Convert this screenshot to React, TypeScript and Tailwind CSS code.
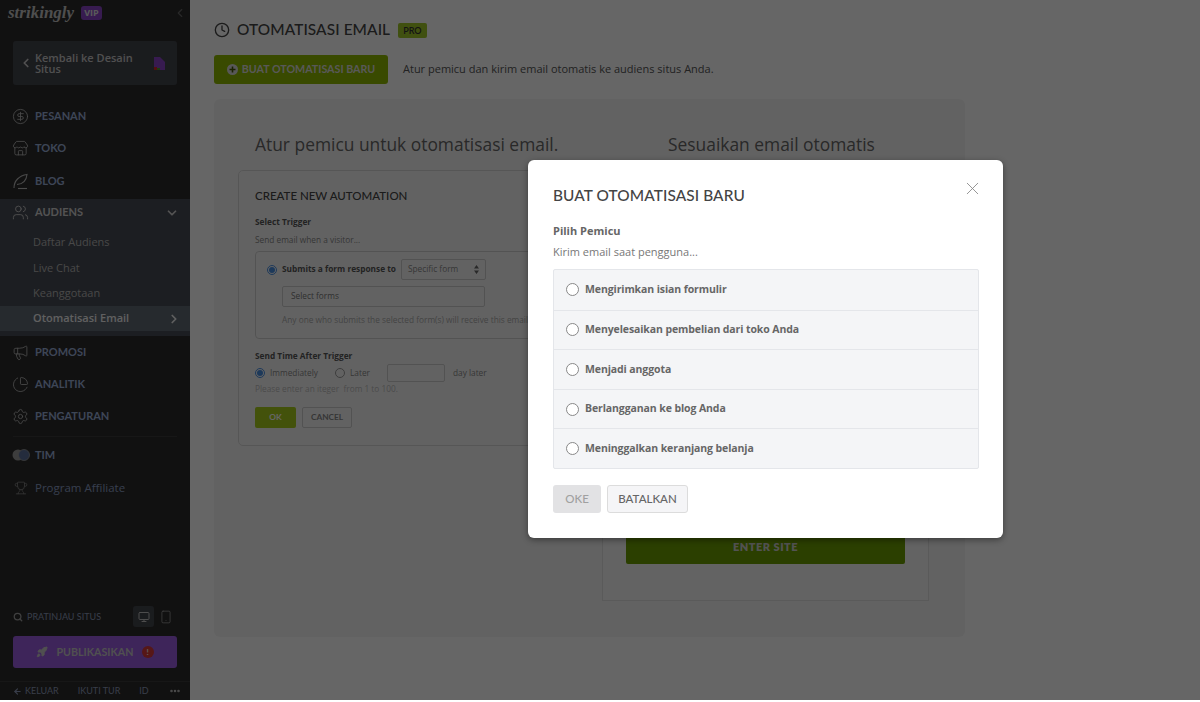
import {
  ArrowLeft,
  ChartPie,
  ChevronDown,
  ChevronLeft,
  ChevronRight,
  CircleDollarSign,
  Clock,
  Ellipsis,
  Megaphone,
  Monitor,
  Rocket,
  Search,
  Settings,
  Smartphone,
  Store,
  Trophy,
  Users,
  X,
} from 'lucide-react'
import type { ReactNode } from 'react'

const BODY = "font-['Open_Sans',sans-serif]"
const HEAD = "font-['Lato',sans-serif]"

const TRIGGERS = [
  'Mengirimkan isian formulir',
  'Menyelesaikan pembelian dari toko Anda',
  'Menjadi anggota',
  'Berlangganan ke blog Anda',
  'Meninggalkan keranjang belanja',
]

function NavItem({ icon, label, tall }: { icon: ReactNode; label: string; tall?: boolean }) {
  return (
    <div className={`flex items-center gap-[6px] pl-[12px] text-[11px] font-bold text-[#9aaed8] ${tall ? 'h-[33px]' : 'h-[32px]'} ${HEAD}`}>
      <span className="flex w-[17px] justify-center text-[#b8b8b8]">{icon}</span>
      {label}
    </div>
  )
}

function SubItem({ label, active, first }: { label: string; active?: boolean; first?: boolean }) {
  return (
    <div
      className={`flex items-center justify-between pl-[33px] pr-[9px] text-[11px] ${first ? 'h-[27px]' : 'h-[25px]'} ${BODY} ${
        active ? 'bg-[#5f6973] font-semibold text-[#f0f0f0]' : 'text-[#b4b4b4]'
      }`}
    >
      {label}
      {active && <ChevronRight size={14} strokeWidth={3} className="text-[#eee]" />}
    </div>
  )
}

function Sidebar() {
  return (
    <aside className="flex h-full w-[190px] shrink-0 flex-col bg-[#2c2c2c]">
      <div className="flex h-[25px] items-center pl-[8px] pr-[3px]">
        <span className="font-['Liberation_Serif',serif] text-[17px] font-bold italic leading-none text-[#c4c4c4]">strikingly</span>
        <span className={`ml-[7px] rounded-[3px] bg-[#8a45c8] px-[3px] text-[9px] font-bold leading-[14px] text-[#e0e0e0] ${BODY}`}>VIP</span>
        <ChevronLeft size={14} className="ml-auto text-[#666]" />
      </div>

      <div className="mx-[13px] mt-[16px] flex h-[44px] items-center rounded-[3px] bg-[#43464d] pl-[6px] pr-[12px]">
        <ChevronLeft size={14} strokeWidth={3} className="shrink-0 text-[#c8c8c8]" />
        <span className={`ml-[2px] w-[108px] text-[11px] font-semibold leading-[11px] text-[#c8c8c8] ${BODY}`}>Kembali ke Desain Situs</span>
        <svg width="11" height="13" viewBox="0 0 11 13" className="ml-auto">
          <path d="M0 0h6l5 5v8H0z" fill="#8a45c8" />
          <path d="M0 10h3v3H0z" fill="#cc2a2a" />
          <path d="M3 11h3v2H3z" fill="#4a9a2a" />
        </svg>
      </div>

      <div className="mt-[15px]">
        <NavItem icon={<CircleDollarSign size={17} strokeWidth={1.2} />} label="PESANAN" />
        <NavItem icon={<Store size={17} strokeWidth={1.2} />} label="TOKO" tall />
        <NavItem
          icon={
            <svg width="17" height="17" viewBox="0 0 17 17" fill="none" stroke="currentColor" strokeWidth="1.1">
              <path d="M2 15C2 8 7 2.5 15 1.5 14.5 7 11 11 5 11.5" />
              <path d="M6 15.5h9" />
            </svg>
          }
          label="BLOG"
        />
      </div>

      <div className="mt-[2px] h-[137px] bg-[#484c55]">
        <div className={`flex h-[27px] items-center gap-[6px] pl-[12px] pr-[11px] text-[11px] font-bold text-[#d0d0d0] ${HEAD}`}>
          <span className="flex w-[17px] justify-center">
            <Users size={17} strokeWidth={1.2} />
          </span>
          AUDIENS
          <ChevronDown size={14} strokeWidth={3} className="ml-auto" />
        </div>
        <div className="pt-[3px]">
          <SubItem label="Daftar Audiens" first />
          <SubItem label="Live Chat" />
          <SubItem label="Keanggotaan" />
          <SubItem label="Otomatisasi Email" active />
        </div>
      </div>

      <div>
        <NavItem icon={<Megaphone size={17} strokeWidth={1.2} />} label="PROMOSI" />
        <NavItem icon={<ChartPie size={17} strokeWidth={1.2} />} label="ANALITIK" />
        <NavItem icon={<Settings size={17} strokeWidth={1.2} />} label="PENGATURAN" />
      </div>

      <div className="mx-[13px] mt-[4px] border-t border-[#3a3a3a]" />

      <div className="mt-[2px]">
        <div className={`flex h-[32px] items-center gap-[5px] pl-[12px] text-[11px] font-bold text-[#9aaed8] ${HEAD}`}>
          <svg width="18" height="12" viewBox="0 0 18 12">
            <circle cx="6" cy="6" r="5.5" fill="#999" />
            <circle cx="12" cy="6" r="5.5" fill="#5a6f9a" stroke="#999" strokeWidth="0.8" />
          </svg>
          TIM
        </div>
        <div className={`flex h-[33px] items-center gap-[7px] pl-[13px] text-[11.5px] text-[#8a9cc2] ${BODY}`}>
          <span className="flex w-[15px] justify-center text-[#888]">
            <Trophy size={14} strokeWidth={1.3} />
          </span>
          Program Affiliate
        </div>
      </div>

      <div className="mt-auto">
        <div className={`flex items-center pl-[13px] pr-[17px] text-[9px] ${HEAD}`}>
          <Search size={10} strokeWidth={3} className="text-[#a0a0a0]" />
          <span className="ml-[4px] text-[#8d9ab8]">PRATINJAU SITUS</span>
          <span className="ml-auto flex h-[21px] w-[21px] items-center justify-center rounded-[3px] bg-[#43464d] text-[#c0c0c0]">
            <Monitor size={12} />
          </span>
          <Smartphone size={14} strokeWidth={1.3} className="ml-[5px] text-[#a0a0a0]" />
        </div>
        <div className={`mx-[13px] mt-[9px] flex h-[32px] items-center justify-center gap-[8px] rounded-[3px] bg-[#9b5ce0] text-[10.7px] font-bold text-[#c8c8c8] ${HEAD}`}>
          <Rocket size={12} fill="#c8c8c8" />
          PUBLIKASIKAN
          <span className="flex h-[12px] w-[12px] items-center justify-center rounded-full bg-[#d63a3a] text-[8px] leading-none text-[#eee]">!</span>
        </div>
        <div className={`mt-[13px] flex h-[19px] items-center border-t border-[#3a3a3a] pl-[13px] pr-[9px] text-[9px] text-[#8d9ab8] ${HEAD}`}>
          <ArrowLeft size={9} strokeWidth={3} />
          <span className="ml-[3px]">KELUAR</span>
          <span className="ml-[19px]">IKUTI TUR</span>
          <span className="ml-[19px]">ID</span>
          <Ellipsis size={12} strokeWidth={3} className="ml-auto text-[#c0c0c0]" />
        </div>
      </div>
    </aside>
  )
}

function Radio({ checked }: { checked?: boolean }) {
  return (
    <span className={`flex h-[10px] w-[10px] shrink-0 items-center justify-center rounded-full border ${checked ? 'border-[#4a90e2]' : 'border-[#999]'}`}>
      {checked && <span className="h-[6px] w-[6px] rounded-full bg-[#4a90e2]" />}
    </span>
  )
}

function AutomationCard() {
  return (
    <div className={`h-[276px] w-[320px] rounded-[5px] border border-[#d8d8d8] pl-[16px] pt-[16px] text-[8.3px] ${BODY}`}>
      <div className={`text-[11.5px] font-medium leading-[17px] text-[#444] ${HEAD}`}>CREATE NEW AUTOMATION</div>
      <div className="mt-[12px] font-bold leading-[12px] text-[#555]">Select Trigger</div>
      <div className="mt-[6px] leading-[12px] text-[#888]">Send email when a visitor...</div>
      <div className="mt-[5px] h-[88px] w-[330px] rounded-[4px] border border-[#d0d0d0] pl-[11px] pt-[7px]">
        <div className="flex items-center gap-[5px]">
          <Radio checked />
          <span className="font-bold text-[#555]">Submits a form response to</span>
          <span className="flex h-[21px] w-[85px] items-center justify-between rounded-[2px] border border-[#ccc] px-[6px] text-[#888]">
            Specific form
            <svg width="5" height="9" viewBox="0 0 5 9" fill="#666">
              <path d="M2.5 0 5 3.5H0zM2.5 9 0 5.5h5z" />
            </svg>
          </span>
        </div>
        <div className="ml-[15px] mt-[6px] flex h-[21px] w-[203px] items-center rounded-[2px] border border-[#ccc] px-[8px] text-[#777]">Select forms</div>
        <div className="ml-[15px] mt-[7px] whitespace-nowrap text-[#aaa]">Any one who submits the selected form(s) will receive this email.</div>
      </div>
      <div className="mt-[11px] font-bold leading-[12px] text-[#555]">Send Time After Trigger</div>
      <div className="mt-[2px] flex h-[18px] items-center text-[#888]">
        <Radio checked />
        <span className="ml-[5px]">Immediately</span>
        <span className="ml-[17px]"><Radio /></span>
        <span className="ml-[5px]">Later</span>
        <span className="ml-[17px] h-[18px] w-[58px] rounded-[2px] border border-[#ccc]" />
        <span className="ml-[8px]">day later</span>
      </div>
      <div className="mt-[1px] leading-[12px] text-[#bbb]">Please enter an iteger&nbsp; from 1 to 100.</div>
      <div className="mt-[12px] flex gap-[6px]">
        <span className={`flex h-[21px] w-[41px] items-center justify-center rounded-[2px] bg-[#a8cc1c] font-bold text-white ${HEAD}`}>OK</span>
        <span className={`flex h-[21px] w-[50px] items-center justify-center rounded-[2px] border border-[#ccc] font-bold text-[#888] ${HEAD}`}>CANCEL</span>
      </div>
    </div>
  )
}

function MainContent() {
  return (
    <main className="min-w-0 flex-1 bg-white pl-[24px] pr-[235px] pt-[20px]">
      <div className="flex h-[20px] items-center">
        <Clock size={16} strokeWidth={2} className="text-[#444]" />
        <h1 className={`ml-[7px] text-[15.4px] font-medium tracking-[0.1px] leading-none text-[#444] ${HEAD}`}>OTOMATISASI EMAIL</h1>
        <span className={`ml-[8px] rounded-[2px] bg-[#a0c828] px-[5px] text-[9px] font-semibold leading-[15px] text-[#333] ${HEAD}`}>PRO</span>
      </div>
      <div className="mt-[15px] flex items-center">
        <div className={`flex h-[29px] w-[174px] items-center justify-center gap-[4px] rounded-[3px] bg-[#90b800] text-[10.7px] font-bold text-[#ddd] ${HEAD}`}>
          <svg width="11" height="11" viewBox="0 0 11 11">
            <circle cx="5.5" cy="5.5" r="5.5" fill="#ddd" />
            <path d="M5.5 2.5v6M2.5 5.5h6" stroke="#445500" strokeWidth="1.6" />
          </svg>
          BUAT OTOMATISASI BARU
        </div>
        <p className={`ml-[15px] text-[11px] text-[#555] ${BODY}`}>Atur pemicu dan kirim email otomatis ke audiens situs Anda.</p>
      </div>

      <section className="relative mt-[15px] h-[538px] overflow-hidden rounded-[6px] bg-[#f6f6f6] pl-[24px]">
        <div className="flex">
          <div className="w-[389px] shrink-0">
            <h2 className={`pl-[17px] pt-[32px] text-[17.4px] leading-[26px] text-[#666] ${BODY}`}>Atur pemicu untuk otomatisasi email.</h2>
            <div className="mt-[13px]">
              <AutomationCard />
            </div>
          </div>
          <div className="w-[328px] shrink-0">
            <h2 className={`ml-[41px] whitespace-nowrap pt-[32px] text-[17.4px] leading-[26px] text-[#666] ${BODY}`}>Sesuaikan email otomatis</h2>
          </div>
        </div>
      </section>
    </main>
  )
}

export default function App() {
  return (
    <div className="relative flex h-[702px] w-[1200px] overflow-hidden bg-white">
      <div className="flex h-[700px] w-full">
        <Sidebar />
        <MainContent />
      </div>

      {/* email preview sits on the page canvas, under the dialog */}
      <div className="absolute left-[602px] top-[400px] h-[201px] w-[327px] border border-[#e2e2e2] bg-[#f8f8f8]">
        <div className="absolute left-[23px] top-[130px] flex h-[33px] w-[279px] items-center justify-center rounded-[2px] bg-[#6c9e00] font-['Lato',sans-serif] text-[11px] font-extrabold tracking-[0.5px] text-[#d0d0d0]">
          ENTER SITE
        </div>
      </div>

      <div className="absolute inset-x-0 top-0 h-[700px] bg-black/60" />

      <div className="absolute left-[528px] top-[160px] h-[378px] w-[475px] rounded-[6px] bg-white pl-[25px] pr-[24px] pt-[25px] shadow-[0_2px_6px_rgba(0,0,0,0.4)]">
        <X size={21} strokeWidth={1} className="absolute right-[20px] top-[18px] text-[#888]" />
        <h2 className={`text-[15.4px] font-medium tracking-[0.1px] leading-[21px] text-[#444] ${HEAD}`}>BUAT OTOMATISASI BARU</h2>
        <div className={`mt-[16px] text-[11px] font-bold leading-[18px] text-[#666] ${BODY}`}>Pilih Pemicu</div>
        <div className={`mt-[3px] text-[11px] leading-[18px] text-[#777] ${BODY}`}>Kirim email saat pengguna...</div>
        <div className="mt-[8px] overflow-hidden rounded-[2px] border border-[#e4e6ea] bg-[#f4f5f7]">
          {TRIGGERS.map((label, i) => (
            <div key={label} className={`flex h-[39.6px] items-center pl-[12px] ${i > 0 ? 'border-t border-[#e4e6ea]' : ''}`}>
              <span className="h-[13px] w-[13px] rounded-full border border-[#888] bg-white" />
              <span className={`ml-[6px] text-[10.5px] font-bold tracking-[-0.1px] text-[#666] ${BODY}`}>{label}</span>
            </div>
          ))}
        </div>
        <div className={`mt-[16px] flex gap-[6px] text-[11.5px] font-medium ${HEAD}`}>
          <span className="flex h-[28px] w-[48px] items-center justify-center rounded-[3px] bg-[#e2e2e4] text-[#a0a0a0]">OKE</span>
          <span className="flex h-[28px] w-[81px] items-center justify-center rounded-[3px] border border-[#dcdcdc] bg-[#f5f5f7] text-[#666]">BATALKAN</span>
        </div>
      </div>
    </div>
  )
}
